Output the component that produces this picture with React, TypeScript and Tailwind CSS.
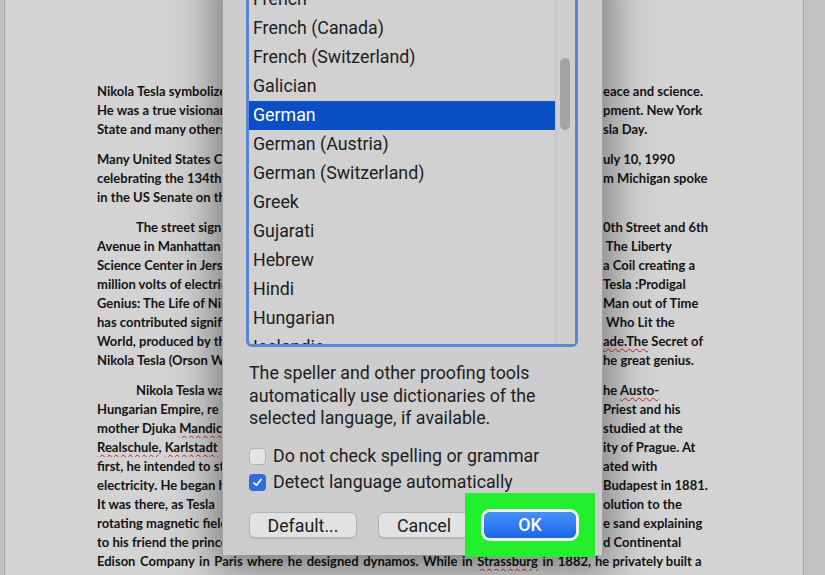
import React from 'react';

type Line = { l: string; r: string; indent?: boolean };

const paragraphs: Line[][] = [
  [
    { l: 'Nikola Tesla symbolizes', r: 'eace and science.' },
    { l: 'He was a true visionary', r: 'pment. New York' },
    { l: 'State and many others', r: 'sla Day.' },
  ],
  [
    { l: 'Many United States Congress', r: 'uly 10, 1990' },
    { l: 'celebrating the 134th birthday', r: 'm Michigan spoke' },
    { l: 'in the US Senate on the', r: '' },
  ],
  [
    { l: 'The street sign', r: '0th Street and 6th', indent: true },
    { l: 'Avenue in Manhattan', r: ' The Liberty' },
    { l: 'Science Center in Jersey', r: 'a Coil creating a' },
    { l: 'million volts of electricity', r: 'Tesla :Prodigal' },
    { l: 'Genius: The Life of Nikola', r: 'Man out of Time' },
    { l: 'has contributed significantly', r: ' Who Lit the' },
    { l: 'World, produced by the', r: '~ade.The~ Secret of' },
    { l: 'Nikola Tesla (Orson Welles)', r: 'he great genius.' },
  ],
  [
    { l: 'Nikola Tesla was', r: 'he ~Austo-~', indent: true },
    { l: 'Hungarian Empire, re', r: 'Priest and his' },
    { l: 'mother Djuka ~Mandic~', r: 'studied at the' },
    { l: '~Realschule~, ~Karlstadt~', r: 'ity of Prague. At' },
    { l: 'first, he intended to study', r: 'ated with' },
    { l: 'electricity. He began his', r: 'Budapest in 1881.' },
    { l: 'It was there, as Tesla', r: 'olution to the' },
    { l: 'rotating magnetic field', r: 'e sand explaining' },
    { l: 'to his friend the prince', r: 'd Continental' },
  ],
];

const languages = [
  'French',
  'French (Canada)',
  'French (Switzerland)',
  'Galician',
  'German',
  'German (Austria)',
  'German (Switzerland)',
  'Greek',
  'Gujarati',
  'Hebrew',
  'Hindi',
  'Hungarian',
  'Icelandic',
];

// words between ~ get the red spell-check squiggle
function marked(text: string) {
  return text.split('~').map((part, i) =>
    i % 2 === 1 ? (
      <span key={i} className="underline decoration-wavy decoration-[#d2232a] decoration-1 underline-offset-2">
        {part}
      </span>
    ) : (
      <span key={i}>{part}</span>
    )
  );
}

function DocLine({ line }: { line: Line }) {
  return (
    <div className="flex h-[19px] items-center whitespace-pre">
      <div className={`w-[506px] overflow-hidden ${line.indent ? 'pl-[39px]' : ''}`}>{marked(line.l)}</div>
      <div>{marked(line.r)}</div>
    </div>
  );
}

function Checkbox({ checked }: { checked?: boolean }) {
  if (checked) {
    return (
      <div className="flex h-[17px] w-[17px] items-center justify-center rounded-[4px] bg-[#2c6ee0]">
        <svg width="11" height="11" viewBox="0 0 12 12" fill="none">
          <path d="M2.2 6.4 L4.8 9 L9.8 2.6" stroke="white" strokeWidth="1.8" strokeLinecap="round" strokeLinejoin="round" />
        </svg>
      </div>
    );
  }
  return <div className="h-[17px] w-[17px] rounded-[4px] border border-[#b3b3b3] bg-[#e4e4e4]" />;
}

function LanguageDialog() {
  return (
    <div className="absolute left-[222px] top-[-40px] h-[595px] w-[381px] border-l border-r border-[#a3a3a3] bg-[#cdcdcd] pl-[23px] pr-[24px] pt-[22px] text-[17.8px] text-[#1d1d1d] shadow-[0_6px_40px_8px_rgba(0,0,0,0.42)] font-['Roboto','Liberation_Sans',sans-serif]">
      {/* language list */}
      <div className="flex h-[365px] rounded-b-[6px] border-[3px] border-[#5a86d4] bg-[#d1d1d1]">
        <div className="flex-1 overflow-hidden">
          {languages.map((lang) => (
            <div
              key={lang}
              className={`flex h-[29px] items-center pl-[4px] ${lang === 'German' ? 'bg-[#0b4fc6] text-white' : ''}`}
            >
              {lang}
            </div>
          ))}
        </div>
        <div className="w-[20px] border-l border-[#c3c3c3] bg-[#cecece] pl-[4px] pt-[73px]">
          <div className="h-[72px] w-[10px] rounded-full bg-[#a4a4a4]" />
        </div>
      </div>

      <p className="mt-[15px] pl-[3px] leading-[22.5px]">
        The speller and other proofing tools automatically use dictionaries of the selected language, if available.
      </p>

      <div className="mt-[14px] pl-[3px]">
        <div className="flex h-[26px] items-center gap-[7px]">
          <Checkbox />
          <span>Do not check spelling or grammar</span>
        </div>
        <div className="flex h-[26px] items-center gap-[7px]">
          <Checkbox checked />
          <span>Detect language automatically</span>
        </div>
      </div>

      <div className="relative mt-[16px] flex pl-[3px]">
        <button className="h-[26px] w-[108px] rounded-[6px] border border-[#b4b4b4] bg-[#e2e2e2] shadow-[0_1px_1px_rgba(0,0,0,0.12)]">
          Default...
        </button>
        <button className="ml-[21px] h-[26px] w-[92px] rounded-[6px] border border-[#b4b4b4] bg-[#e2e2e2] shadow-[0_1px_1px_rgba(0,0,0,0.12)]">
          Cancel
        </button>
        {/* green highlight from the tutorial */}
        <div className="absolute left-[219px] top-[-19px] h-[64px] w-[130px] bg-[#22f02c]" />
        <button className="relative z-10 ml-[14px] h-[26px] w-[92px] rounded-[6px] bg-gradient-to-b from-[#4390f8] to-[#1c66e8] font-medium text-white ring-[3px] ring-[#f2f2f2]">
          OK
        </button>
      </div>
    </div>
  );
}

export default function App() {
  return (
    <div className="relative h-[575px] w-[825px] overflow-hidden bg-[#c3c3c3]">
      <div className="ml-[4px] h-full w-[800px] border-l border-r border-[#a9a9a9] bg-[#d3d3d3] pl-[92px] pt-[82px] text-[13px] font-bold text-[#141414] font-['Lato','Liberation_Sans',sans-serif]">
        {paragraphs.map((para, i) => (
          <div key={i} className={i === paragraphs.length - 1 ? '' : 'mb-[11px]'}>
            {para.map((line, j) => (
              <DocLine key={j} line={line} />
            ))}
          </div>
        ))}
        <div className="flex h-[19px] items-center whitespace-pre">
          <div className="w-[494px] overflow-hidden [text-align-last:justify]">
            Edison Company in Paris where he designed dynamos. While in {marked('~Strassburg~')} in 1882,
          </div>
          <div className="pl-[4px]">he privately built a</div>
        </div>
        <div className="flex h-[19px] items-center whitespace-pre">
          prototype of the induction motor and successfully tested it. Tesla moved to
        </div>
      </div>
      <LanguageDialog />
    </div>
  );
}
